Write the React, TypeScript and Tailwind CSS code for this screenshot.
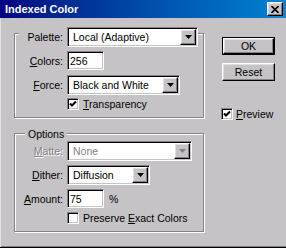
import React from "react";

const sunken =
  "border border-t-[#848284] border-l-[#848284] border-r-white border-b-white shadow-[inset_1px_1px_0_#000,inset_-1px_-1px_0_#c6c3c6]";
const raised =
  "border border-t-white border-l-white border-r-black border-b-black shadow-[inset_-1px_-1px_0_#848284,inset_1px_1px_0_#dfdfdf]";

const Key = ({ children }: { children: React.ReactNode }) => (
  <span className="underline underline-offset-[1px]">{children}</span>
);

function Select({
  value,
  width,
  disabled,
}: {
  value: string;
  width: string;
  disabled?: boolean;
}) {
  return (
    <div className={`${sunken} ${width} h-[20px] bg-white flex p-[1px]`}>
      <span
        className={`flex-1 flex items-center pl-[4px] ${
          disabled ? "text-[#848284]" : ""
        }`}
      >
        {value}
      </span>
      <span
        className={`${raised} w-[16px] bg-[#c6c3c6] flex items-center justify-center`}
      >
        <svg width="7" height="4" viewBox="0 0 7 4">
          <path d="M0 0h7L3.5 4z" fill={disabled ? "#848284" : "#000"} />
        </svg>
      </span>
    </div>
  );
}

const TextBox = ({ value }: { value: string }) => (
  <div className={`${sunken} w-[37px] h-[19px] bg-white flex items-center pl-[2px]`}>
    {value}
  </div>
);

const CheckBox = ({ checked }: { checked?: boolean }) => (
  <span className={`${sunken} w-[12px] h-[12px] bg-white flex items-center justify-center`}>
    {checked && (
      <svg width="8" height="8" viewBox="0 0 8 8">
        <path d="M1 3.5L3 5.5L7 1.5" stroke="#000" strokeWidth="2" fill="none" />
      </svg>
    )}
  </span>
);

const Label = ({ children, disabled }: { children: React.ReactNode; disabled?: boolean }) => (
  <span
    className={`w-[48px] text-right ${
      disabled ? "text-[#848284] [text-shadow:1px_1px_0_#fff]" : ""
    }`}
  >
    {children}
  </span>
);

const groupBox =
  "w-[190px] border border-[#848284] shadow-[1px_1px_0_#fff,inset_1px_1px_0_#fff] flex flex-col";

export default function App() {
  return (
    <div className="w-[286px] h-[248px] bg-[#c6c3c6] flex flex-col font-['Liberation_Sans',Arial,sans-serif] text-[10.5px] leading-[12px] text-black border-b border-black shadow-[inset_1px_0_0_#dfdfdf,inset_0_-1px_0_#848284]">
      {/* Title bar */}
      <div className="h-[18px] flex items-center justify-between pl-[5px] pr-[3px] bg-linear-to-r from-[#000080] to-[#1084d0]">
        <span className="text-white font-bold text-[11px]">Indexed Color</span>
        <span className={`${raised} w-[16px] h-[14px] bg-[#c6c3c6] flex items-center justify-center`}>
          <svg width="8" height="7" viewBox="0 0 8 7">
            <path d="M0.5 0L7.5 7M7.5 0L0.5 7" stroke="#000" strokeWidth="1.6" />
          </svg>
        </span>
      </div>

      <div className="flex pl-[14px]">
        {/* Left column */}
        <div className="flex flex-col">
          {/* Palette group */}
          <div className={`${groupBox} mt-[15px] pb-[7px]`}>
            <div className="-mt-[7px] ml-[4px] w-[179px] h-[20px] bg-[#c6c3c6] flex items-center gap-[4px]">
              <span className="w-[44px] text-right">Palette:</span>
              <Select value="Local (Adaptive)" width="w-[131px]" />
            </div>
            <div className="mt-[4px] flex items-center gap-[4px]">
              <Label>
                <Key>C</Key>olors:
              </Label>
              <TextBox value="256" />
            </div>
            <div className="mt-[5px] flex items-center gap-[4px]">
              <Label>
                <Key>F</Key>orce:
              </Label>
              <Select value="Black and White" width="w-[113px]" />
            </div>
            <div className="mt-[3px] ml-[52px] flex items-center gap-[4px]">
              <CheckBox checked />
              <span>
                <Key>T</Key>ransparency
              </span>
            </div>
          </div>

          {/* Options group */}
          <div className={`${groupBox} mt-[15px] pb-[7px]`}>
            <div className="-mt-[7px] ml-[10px] self-start h-[13px] px-[3px] bg-[#c6c3c6] flex items-center">
              Options
            </div>
            <div className="mt-[1px] flex items-center gap-[4px]">
              <Label disabled>
                <Key>M</Key>atte:
              </Label>
              <Select value="None" width="w-[125px]" disabled />
            </div>
            <div className="mt-[4px] flex items-center gap-[4px]">
              <Label>
                <Key>D</Key>ither:
              </Label>
              <Select value="Diffusion" width="w-[83px]" />
            </div>
            <div className="mt-[4px] flex items-center gap-[4px]">
              <Label>
                <Key>A</Key>mount:
              </Label>
              <TextBox value="75" />
              <span className="ml-[1px]">%</span>
            </div>
            <div className="mt-[4px] ml-[52px] flex items-center gap-[4px]">
              <CheckBox />
              <span>
                Preserve <Key>E</Key>xact Colors
              </span>
            </div>
          </div>
        </div>

        {/* Right column */}
        <div className="ml-[18px] flex flex-col">
          <div className="mt-[19px] w-[53px] h-[18px] border border-black">
            <div className={`${raised} h-full bg-[#c6c3c6] flex items-center justify-center`}>
              OK
            </div>
          </div>
          <div className={`${raised} mt-[8px] w-[53px] h-[18px] bg-[#c6c3c6] flex items-center justify-center`}>
            Reset
          </div>
          <div className="mt-[27px] -ml-[1px] flex items-center gap-[3px]">
            <CheckBox checked />
            <span>
              <Key>P</Key>review
            </span>
          </div>
        </div>
      </div>
    </div>
  );
}
